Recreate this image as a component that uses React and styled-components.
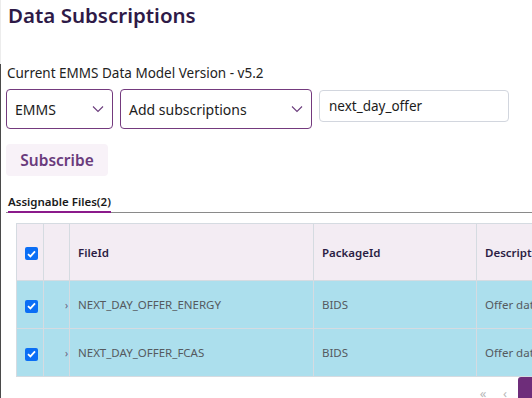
import React, { useState } from "react";
import styled, { createGlobalStyle } from "styled-components";

const GlobalStyle = createGlobalStyle`
	html, body {
		margin: 0;
		padding: 0;
		background: #ffffff;
		overflow: hidden;
	}
	body {
		font-family: "Noto Sans", "Open Sans", sans-serif;
	}
`;

const Page = styled.div`
	width: 532px;
	height: 398px;
	overflow: hidden;
	display: flex;
	flex-direction: column;
`;

const Title = styled.h1`
	margin: 0;
	padding: 1px 0 0 7px;
	height: 64px;
	box-sizing: border-box;
	font-size: 20.5px;
	font-weight: 600;
	color: #2e1a47;
	border-left: 1px solid #ececec;
`;

const Content = styled.div`
	flex: 1;
	border-left: 1px solid #4a4a4a;
	padding-left: 5px;
	display: flex;
	flex-direction: column;
`;

const Version = styled.div`
	font-size: 13.5px;
	color: #222;
	height: 25px;
	padding-left: 1px;
`;

const Controls = styled.div`
	display: flex;
	align-items: flex-start;
	gap: 7px;
`;

const Select = styled.div`
	width: ${(p) => p.width}px;
	height: 40px;
	box-sizing: border-box;
	border: 1px solid #743a7e;
	border-radius: 4px;
	display: flex;
	align-items: center;
	justify-content: space-between;
	padding: 0 8px 0 8px;
	font-size: 14px;
	color: #1c1c1c;
`;

const TextInput = styled.input`
	width: 190px;
	height: 32px;
	box-sizing: border-box;
	border: 1px solid #d2d6de;
	border-radius: 4px;
	padding: 0 9px;
	margin-top: 1px;
	font-family: inherit;
	font-size: 13.5px;
	color: #1c1c1c;
	outline: none;
`;

const SubscribeButton = styled.button`
	margin-top: 15px;
	align-self: flex-start;
	width: 102px;
	height: 32px;
	border: none;
	border-radius: 4px;
	background: #f8f2f8;
	color: #6a3b7c;
	font-family: inherit;
	font-size: 15.5px;
	font-weight: 600;
`;

const Tabs = styled.div`
	margin-top: 18px;
	display: flex;
	border-bottom: 1px solid #8a8a8a;
	padding-left: 2px;
`;

const Tab = styled.div`
	font-size: 11.5px;
	font-weight: 600;
	color: #1a1a1a;
	padding-bottom: 2px;
	border-bottom: 2px solid ${(p) => (p.active ? "#8b1a8b" : "transparent")};
	margin-bottom: -1px;
`;

const TableWrap = styled.div`
	margin: 10px 0 0 10px;
	width: 584px;
`;

const Table = styled.table`
	border-collapse: collapse;
	width: 100%;
	table-layout: fixed;
	border: 1px solid #d5dbe1;
`;

const Th = styled.th`
	height: 56px;
	background: #f3ecf3;
	border-left: 1px solid #d5dbe1;
	text-align: left;
	padding: 0 0 0 8px;
	font-size: 11.5px;
	font-weight: 600;
	color: #2b1d44;
	white-space: nowrap;
	overflow: hidden;
`;

const Row = styled.tr`
	background: ${(p) => (p.selected ? "#acdfed" : "#ffffff")};
	border-top: 1px solid #d5dbe1;
`;

const Td = styled.td`
	height: 47px;
	border-left: 1px solid #d5dbe1;
	padding: 0 0 0 8px;
	font-size: 11.5px;
	color: #555a5f;
	white-space: nowrap;
	overflow: hidden;
`;

const CheckCell = styled.td`
	height: 47px;
	padding: 0 0 0 8px;
`;

const CheckHead = styled.th`
	height: 56px;
	background: #f3ecf3;
	padding: 0 0 0 8px;
	text-align: left;
`;

const ExpandCell = styled.td`
	border-left: 1px solid #d5dbe1;
	text-align: right;
	padding: 0 1px 0 0;
	font-size: 10px;
	color: #6a5a7a;
`;

const Check = styled.span`
	display: inline-flex;
	width: 13px;
	height: 13px;
	border-radius: 2px;
	background: #0b6ef5;
	align-items: center;
	justify-content: center;
	vertical-align: middle;
`;

const Pager = styled.div`
	display: flex;
	justify-content: flex-end;
	align-items: flex-start;
	height: 20px;
`;

const PageArrow = styled.span`
	font-size: 13px;
	color: #b8b8b8;
	line-height: 20px;
	padding-top: 6px;
	width: 22px;
	text-align: center;
	margin-right: ${(p) => p.gap || 0}px;
`;

const PageButton = styled.div`
	width: 30px;
	height: 30px;
	border-radius: 3px;
	margin-right: 8px;
	background: ${(p) => (p.active ? "#6e2d7a" : "transparent")};
`;

function CheckBox() {
	return (
		<Check>
			<svg width="9" height="8" viewBox="0 0 9 8">
				<path d="M1 4.2 L3.4 6.4 L8 1.4" fill="none" stroke="#fff" strokeWidth="1.8" />
			</svg>
		</Check>
	);
}

function Chevron() {
	return (
		<svg width="12" height="8" viewBox="0 0 12 8">
			<path d="M1 1.5 L6 6.5 L11 1.5" fill="none" stroke="#6a3b7c" strokeWidth="1.1" />
		</svg>
	);
}

const files = [
	{ id: "NEXT_DAY_OFFER_ENERGY", pkg: "BIDS", desc: "Offer data for energy" },
	{ id: "NEXT_DAY_OFFER_FCAS", pkg: "BIDS", desc: "Offer data for FCAS" },
];

export default function App() {
	const [search, setSearch] = useState("next_day_offer");

	return (
		<Page>
			<GlobalStyle />
			<Title>Data Subscriptions</Title>
			<Content>
				<Version>Current EMMS Data Model Version - v5.2</Version>
				<Controls>
					<Select width={107}>
						EMMS
						<Chevron />
					</Select>
					<Select width={192}>
						Add subscriptions
						<Chevron />
					</Select>
					<TextInput value={search} onChange={(e) => setSearch(e.target.value)} />
				</Controls>
				<SubscribeButton>Subscribe</SubscribeButton>
				<Tabs>
					<Tab active>Assignable Files(2)</Tab>
				</Tabs>
				<TableWrap>
					<Table>
						<colgroup>
							<col style={{ width: 27 }} />
							<col style={{ width: 26 }} />
							<col style={{ width: 244 }} />
							<col style={{ width: 163 }} />
							<col />
						</colgroup>
						<thead>
							<tr>
								<CheckHead>
									<CheckBox />
								</CheckHead>
								<Th />
								<Th>FileId</Th>
								<Th>PackageId</Th>
								<Th>Description</Th>
							</tr>
						</thead>
						<tbody>
							{files.map((f) => (
								<Row key={f.id} selected>
									<CheckCell>
										<CheckBox />
									</CheckCell>
									<ExpandCell>›</ExpandCell>
									<Td>{f.id}</Td>
									<Td>{f.pkg}</Td>
									<Td>{f.desc}</Td>
								</Row>
							))}
						</tbody>
					</Table>
					<Pager>
						<PageArrow>«</PageArrow>
						<PageArrow gap={2}>‹</PageArrow>
						<PageButton active />
						<PageArrow>›</PageArrow>
						<PageArrow>»</PageArrow>
					</Pager>
				</TableWrap>
			</Content>
		</Page>
	);
}
